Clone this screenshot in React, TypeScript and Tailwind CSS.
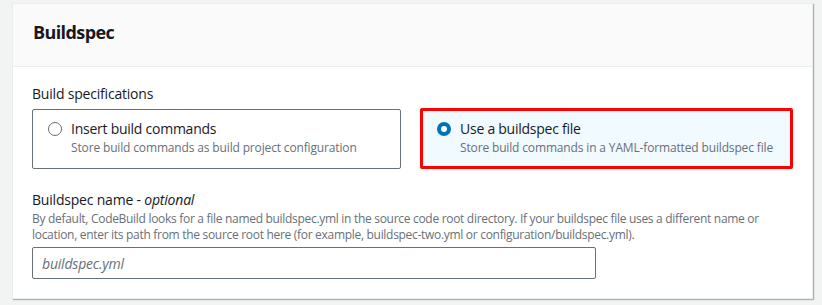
const font = { fontFamily: '"Open Sans", "Noto Sans", Arial, sans-serif' }

interface TileProps {
    title: string
    description: string
    checked?: boolean
}

function RadioTile({ title, description, checked }: TileProps) {
    return (
        <div
            className={
                checked
                    ? 'flex h-[61px] w-[373px] items-start rounded-[2px] border-[3px] border-[#ff0000] bg-[#f1faff] pl-[14px] pt-[8px]'
                    : 'flex h-[60px] w-[369px] items-start rounded-[2px] border border-[#687078] bg-white pl-[15px] pt-[9px]'
            }
        >
            {checked ? (
                <span className="mt-[3px] flex h-[14px] w-[14px] shrink-0 items-center justify-center rounded-full bg-[#0073bb]">
                    <span className="h-[6px] w-[6px] rounded-full bg-white" />
                </span>
            ) : (
                <span className="mt-[3px] h-[14px] w-[14px] shrink-0 rounded-full border-[1.5px] border-[#687078] bg-white" />
            )}
            <div className="ml-[9px] flex flex-col">
                <span className="text-[14px] leading-[20px] tracking-[-0.25px] text-[#16191f]">{title}</span>
                <span className="text-[12px] leading-[18px] tracking-[-0.15px] text-[#687078]">{description}</span>
            </div>
        </div>
    )
}

export default function App() {
    return (
        <div className="h-[305px] w-[822px] bg-[#f2f3f3] pl-[12px] pt-[3px]" style={font}>
            <div className="h-[296px] w-[801px] border border-[#eaeded] bg-white shadow-[1px_1px_1px_rgba(0,28,36,0.3)]">
                <div className="h-[63px] border-b border-[#eaeded] bg-[#fafafa] px-[20px] pt-[17px]">
                    <h2 className="text-[18px] font-bold leading-[22px] tracking-[-0.6px] text-[#16191f]">Buildspec</h2>
                </div>
                <div className="px-[19px] pt-[16px]">
                    <div className="text-[14px] leading-[22px] tracking-[-0.2px] text-[#16191f]">Build specifications</div>
                    <div className="mt-[3px] flex items-center gap-[19px]">
                        <RadioTile
                            title="Insert build commands"
                            description="Store build commands as build project configuration"
                        />
                        <RadioTile
                            checked
                            title="Use a buildspec file"
                            description="Store build commands in a YAML-formatted buildspec file"
                        />
                    </div>
                    <div className="mt-[20px] text-[14px] leading-[22px] tracking-[-0.2px] text-[#16191f]">
                        Buildspec name - <i>optional</i>
                    </div>
                    <p className="text-[12px] leading-[16px] tracking-[-0.3px] text-[#687078]">
                        By default, CodeBuild looks for a file named buildspec.yml in the source code root directory. If
                        your buildspec file uses a different name or location, enter its path from the source root here
                        (for example, buildspec-two.yml or configuration/buildspec.yml).
                    </p>
                    <div className="mt-[4px] flex h-[32px] w-[564px] items-center rounded-[2px] border border-[#687078] bg-white px-[9px]">
                        <span className="text-[14px] italic tracking-[-0.2px] text-[#687078]">buildspec.yml</span>
                    </div>
                </div>
            </div>
        </div>
    )
}
